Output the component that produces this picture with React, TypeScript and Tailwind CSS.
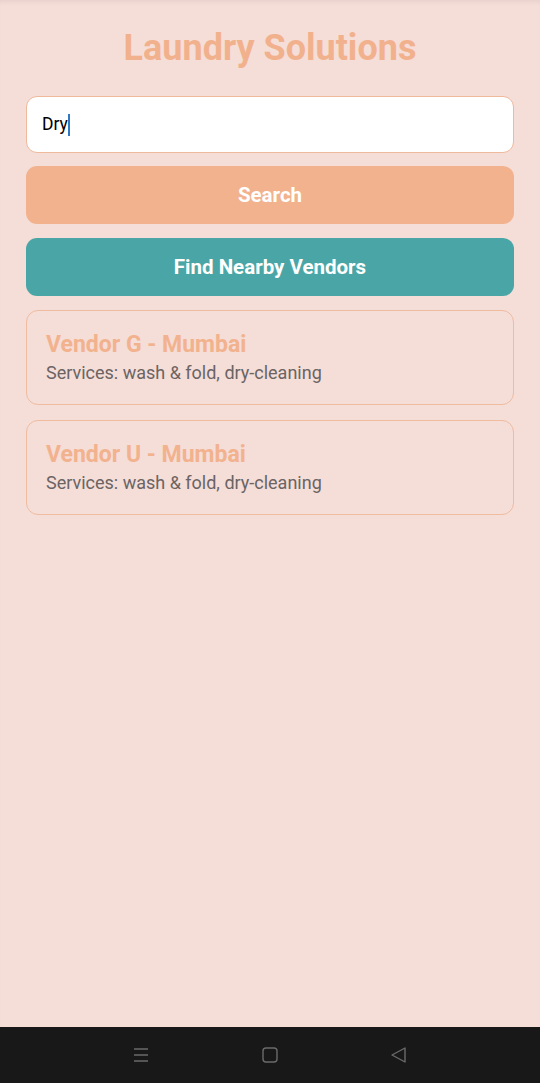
import React from 'react';

const vendors = [
  { name: 'Vendor G - Mumbai', services: 'wash & fold, dry-cleaning' },
  { name: 'Vendor U - Mumbai', services: 'wash & fold, dry-cleaning' },
];

export default function App() {
  return (
    <div className="w-[540px] h-[1083px] flex flex-col bg-[#f5ddd8] font-['Roboto',sans-serif]">
      <div className="flex-1 flex flex-col px-[26px] shadow-[inset_0_5px_5px_-3px_rgba(0,0,0,0.06)]">
        <h1 className="text-center text-[36px] font-bold text-[#f2b18d] leading-none mt-[30px] mb-[30px]">
          Laundry Solutions
        </h1>

        <div className="h-[57px] bg-white border border-[#efb99c] rounded-[11px] flex items-center px-[15px]">
          <span className="text-[17.5px] text-black">Dry</span>
          <span className="w-[2px] h-[22px] bg-[#2f78c4]" />
        </div>

        <button className="mt-[13px] h-[58px] rounded-[11px] bg-[#f2b28d] text-white text-[20.5px] font-bold">
          Search
        </button>

        <button className="mt-[14px] h-[58px] rounded-[11px] bg-[#4aa6a6] text-white text-[20.5px] font-bold">
          Find Nearby Vendors
        </button>

        <div className="mt-[14px] flex flex-col gap-[15px]">
          {vendors.map((v, i) => (
            <div key={i} className="h-[95px] border border-[#efbc9f] rounded-[12px] px-[19px] pt-[20px]">
              <div className="text-[23px] font-bold text-[#f2b28d] leading-[28px]">{v.name}</div>
              <div className="text-[18px] text-[#6b6463] leading-[24px] mt-[2px]">Services: {v.services}</div>
            </div>
          ))}
        </div>
      </div>

      <div className="h-[56px] bg-[#181818] flex items-center justify-center gap-[111px]">
        <svg width="18" height="16" viewBox="0 0 18 16" fill="none" stroke="#6a6a6a" strokeWidth="1.4">
          <path d="M2 2h14M2 8h14M2 14h14" />
        </svg>
        <svg width="18" height="18" viewBox="0 0 18 18" fill="none" stroke="#6a6a6a" strokeWidth="1.4">
          <rect x="2" y="2" width="14" height="14" rx="3" />
        </svg>
        <svg width="18" height="18" viewBox="0 0 18 18" fill="none" stroke="#6a6a6a" strokeWidth="1.4" strokeLinejoin="round">
          <path d="M15 2L2 9l13 7z" />
        </svg>
      </div>
    </div>
  );
}
